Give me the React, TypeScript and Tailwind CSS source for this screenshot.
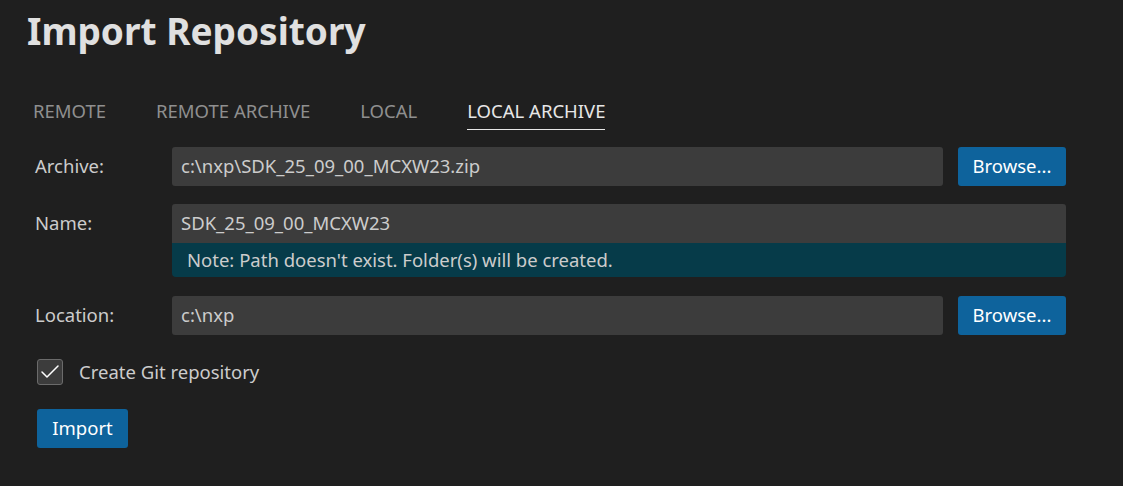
import { Check } from "lucide-react"

const tabs = ["REMOTE", "REMOTE ARCHIVE", "LOCAL", "LOCAL ARCHIVE"]

const Browse = () => (
  <button className="h-[39px] w-[108px] shrink-0 rounded-[3px] bg-[#0e639c] text-[18.5px] text-white">
    Browse...
  </button>
)

export default function App() {
  return (
    <div className="h-[486px] w-[1123px] overflow-hidden bg-[#1f1f1f] text-[#cccccc]" style={{ fontFamily: '"Noto Sans", "Open Sans", sans-serif' }}>
      <div className="pl-[27px] pt-[5px]">
        <h1 className="text-[37px] font-bold leading-[52px] text-[#e0e0e0]">Import Repository</h1>
      </div>

      <div className="ml-[33px] mt-[40px] flex gap-[50px] text-[18.5px]">
        {tabs.map((t, i) => (
          <div key={t} className={i === 3 ? "border-b border-[#e7e7e7] pb-[4px] text-[#e7e7e7]" : "pb-[4px] text-[#8f8f8f]"}>
            {t}
          </div>
        ))}
      </div>

      <div className="ml-[35px] mt-[17px] w-[1031px] text-[18.5px]">
        <div className="flex items-center">
          <div className="w-[137px] shrink-0">Archive:</div>
          <div className="flex h-[39px] flex-1 items-center rounded-[3px] bg-[#3c3c3c] pl-[9px]">c:\nxp\SDK_25_09_00_MCXW23.zip</div>
          <div className="ml-[15px]"><Browse /></div>
        </div>

        <div className="mt-[18px] flex">
          <div className="flex h-[39px] w-[137px] shrink-0 items-center">Name:</div>
          <div className="flex-1">
            <div className="flex h-[39px] items-center rounded-t-[3px] bg-[#3c3c3c] pl-[9px]">SDK_25_09_00_MCXW23</div>
            <div className="flex h-[34px] items-center rounded-b-[4px] bg-[#063b49] pl-[15px]">
              Note: Path doesn't exist. Folder(s) will be created.
            </div>
          </div>
        </div>

        <div className="mt-[19px] flex items-center">
          <div className="w-[137px] shrink-0">Location:</div>
          <div className="flex h-[39px] flex-1 items-center rounded-[3px] bg-[#3c3c3c] pl-[9px]">c:\nxp</div>
          <div className="ml-[15px]"><Browse /></div>
        </div>

        <div className="mt-[23px] flex items-center">
          <div className="ml-[2px] flex h-[26px] w-[26px] items-center justify-center rounded-[3px] border border-[#6b6b6b] bg-[#3c3c3c]">
            <Check size={24} strokeWidth={1.5} className="text-white" />
          </div>
          <span className="ml-[16px]">Create Git repository</span>
        </div>

        <button className="ml-[2px] mt-[23px] h-[39px] w-[91px] rounded-[3px] bg-[#0e639c] text-[18.5px] text-white">Import</button>
      </div>
    </div>
  )
}
